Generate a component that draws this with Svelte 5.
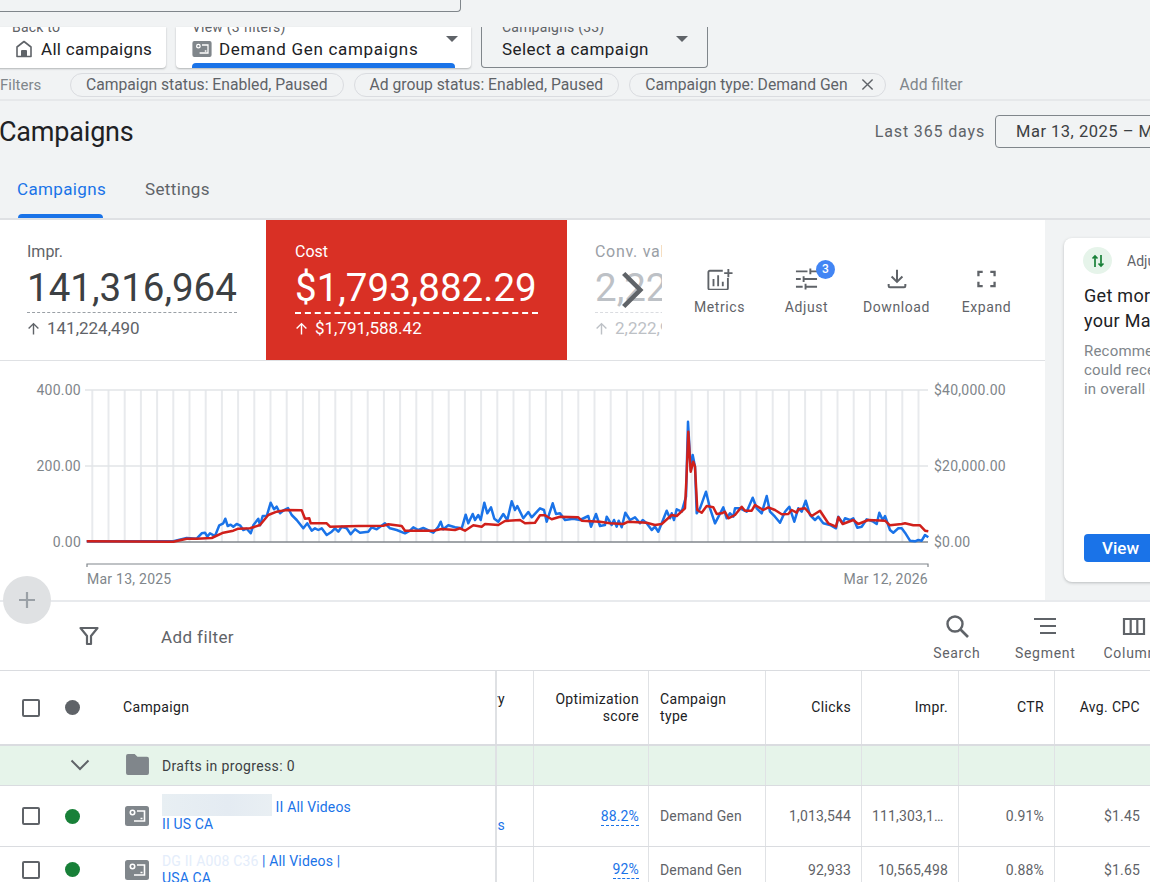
<script>
  const blueL = [80,484,340,484,380,474,410,476,425,460,435,458,442,470,450,460,465,468,478,436,490,430,496,416,503,438,512,434,520,440,530,432,540,436,550,450,560,446,572,460,580,436,595,416,600,436,608,408,620,408,632,368,642,388,650,380,660,400,672,390,684,384,695,405,710,420,730,445,742,430,755,452,765,445,775,450,785,445,800,465,815,455,825,445,835,455,845,440,860,445,872,463,885,448,900,458,925,455,935,442,950,448,975,430,990,445,1010,450,1035,460,1050,452,1060,442,1075,450,1090,444,1120,458,1135,440,1142,425,1150,448,1165,436,1185,442,1205,445,1217,404,1225,430,1238,402,1245,420,1255,405,1262,420,1273,368,1282,400,1293,382,1303,416,1315,425,1330,402,1342,420,1355,364,1365,390,1372,378,1390,415,1405,396,1415,412,1440,385,1452,390,1460,425,1478,370,1488,402,1500,400];
  const blueR = [0,400,15,420,40,416,60,420,85,408,93,440,108,402,120,438,135,435,140,410,155,435,162,420,170,440,176,422,185,442,196,398,210,420,225,412,240,430,248,420,260,430,275,450,285,440,295,455,305,430,320,392,330,415,335,400,342,420,350,388,365,395,378,350,384,125,392,270,398,225,405,260,410,400,420,385,438,335,450,385,465,430,490,382,500,415,510,400,520,410,525,385,540,385,560,395,578,353,590,385,605,400,620,348,630,395,645,410,660,428,675,395,688,380,703,425,715,385,725,395,737,362,750,405,765,420,775,410,790,430,810,435,828,445,835,410,848,430,855,415,870,420,880,415,892,443,905,440,920,418,940,425,950,432,958,398,968,420,975,408,990,450,1000,458,1015,445,1025,445,1035,458,1050,482,1065,484,1075,480,1085,482,1095,465,1105,472];
  const redL = [80,484,340,485,380,476,410,476,455,474,490,458,520,452,535,446,570,445,600,435,625,405,650,395,680,390,725,391,735,416,748,415,752,430,800,430,810,440,895,438,970,437,985,433,1025,438,1035,452,1120,452,1145,447,1185,450,1200,445,1215,452,1240,436,1265,440,1275,432,1315,435,1335,423,1380,420,1395,430,1425,428,1440,406,1455,406,1475,418,1500,410];
  const redR = [0,410,55,412,65,422,120,425,150,430,190,432,205,425,260,428,285,435,305,432,335,405,350,408,375,385,380,280,385,155,392,275,400,245,405,260,412,390,425,398,440,378,460,382,470,402,485,400,495,395,505,415,525,405,545,380,555,392,575,392,585,375,610,390,625,382,645,390,665,403,685,402,695,390,710,398,715,388,735,385,755,408,780,392,805,430,828,440,835,412,848,432,880,420,895,432,925,420,975,422,990,436,1025,432,1035,430,1060,436,1080,436,1095,452,1105,454];

  function pts(arr, ox) {
    const out = [];
    for (let i = 0; i < arr.length; i += 2) {
      out.push(`${(ox + arr[i] / 3).toFixed(1)},${(380 + arr[i + 1] / 3).toFixed(1)}`);
    }
    return out;
  }
  const bluePts = [...pts(blueL, 60), ...pts(blueR, 560)].join(' ');
  const redPts = [...pts(redL, 60), ...pts(redR, 560)].join(' ');
  const vlines = Array.from({ length: 52 }, (_, i) => 92.3 + i * 16.2);
  const yLabels = [
    { y: 390, l: '400.00', r: '$40,000.00' },
    { y: 466, l: '200.00', r: '$20,000.00' },
    { y: 542, l: '0.00', r: '$0.00' }
  ];
  const actions = ['Metrics', 'Adjust', 'Download', 'Expand'];
  const chips = ['Campaign status: Enabled, Paused', 'Ad group status: Enabled, Paused'];
</script>

{#snippet typeIcon(cls)}
  <svg class={cls} viewBox="0 0 24 20" aria-hidden="true">
    <rect width="24" height="20" rx="2.5" fill="#80868b" />
    <circle cx="7.5" cy="6.5" r="2.2" fill="none" stroke="#fff" stroke-width="1.6" />
    <path d="M12 5h7.5v10H9M15.500 12.500h2" fill="none" stroke="#fff" stroke-width="1.6" />
  </svg>
{/snippet}

{#snippet upArrow()}
  <svg class="ar" viewBox="0 0 12 12" aria-hidden="true"><path d="M6 11.500V1.500M1.500 6 6 1.500 10.500 6" fill="none" stroke="currentColor" stroke-width="1.300" /></svg>
{/snippet}

<div class="page">
  <div class="top"><div class="topbox"></div></div>

  <div class="nav">
    <div class="navcard back">
      <div class="navlabel">Back to</div>
      <div class="navval">
        <svg class="home" viewBox="0 0 20 20" aria-hidden="true">
          <path d="M10 2.500 3 8v9.500h14V8z" fill="none" stroke="#5f6368" stroke-width="1.600" stroke-linejoin="round" />
          <path d="M7 17.500v-5.500a1 1 0 0 1 1-1h4a1 1 0 0 1 1 1v5.500z" fill="#5f6368" />
        </svg>
        All campaigns
      </div>
    </div>
    <div class="navcard view">
      <div class="navlabel">View (3 filters)</div>
      <div class="navval">
        {@render typeIcon('ti-small')}
        Demand Gen campaigns
      </div>
      <span class="caret c1"></span>
      <div class="navbar"></div>
    </div>
    <div class="navcard camp">
      <div class="navlabel">Campaigns (33)</div>
      <div class="navval">Select a campaign</div>
      <span class="caret c2"></span>
    </div>
  </div>

  <div class="filters">
    <span class="flabel">Filters</span>
    {#each chips as c}<span class="chip">{c}</span>{/each}
    <span class="chip last">Campaign type: Demand Gen
      <svg viewBox="0 0 14 14" class="x" aria-hidden="true"><path d="M1.500 1.500l11 11M12.500 1.500l-11 11" stroke="#5f6368" stroke-width="1.500" fill="none" /></svg>
    </span>
    <span class="addf">Add filter</span>
  </div>

  <div class="titlerow">
    <h1>Campaigns</h1>
    <span class="last365">Last 365 days</span>
    <span class="range">Mar 13, 2025 – Mar 12, 2026</span>
  </div>

  <div class="tabs">
    <span class="tab on">Campaigns</span>
    <span class="tab">Settings</span>
  </div>

  <div class="overview">
    <div class="main">
      <div class="scores">
        <div class="score impr">
          <div class="sl">Impr.</div>
          <div class="sv">141,316,964</div>
          <div class="sd">{@render upArrow()}141,224,490</div>
        </div>
        <div class="score cost">
          <div class="sl">Cost</div>
          <div class="sv">$1,793,882.29</div>
          <div class="sd">{@render upArrow()}$1,791,588.42</div>
        </div>
        <div class="score conv">
          <div class="sl">Conv. value</div>
          <div class="sv">2,222,910.55</div>
          <div class="sd">{@render upArrow()}2,222,910.55</div>
          <svg class="chev" viewBox="0 0 26 44" preserveAspectRatio="none" aria-hidden="true"><path d="M4 3l18 19L4 41" fill="none" stroke="#5f6368" stroke-width="5" /></svg>
        </div>
        <div class="actions">
          {#each actions as a}
            <div class="act">
              {#if a === 'Metrics'}
                <svg viewBox="0 0 28 24" preserveAspectRatio="none" class="ai m" aria-hidden="true">
                  <path d="M17 3H3a1.500 1.500 0 0 0-1.500 1.500v17.500A1.500 1.500 0 0 0 3 23.500h18a1.500 1.500 0 0 0 1.500-1.500V11" fill="none" stroke="#5f6368" stroke-width="2" />
                  <path d="M7 12v8M12 8v12M17 15v5" stroke="#5f6368" stroke-width="2" fill="none" />
                  <path d="M23 1v9M18.500 5.500h9" stroke="#5f6368" stroke-width="2" fill="none" />
                </svg>
              {:else if a === 'Adjust'}
                <svg viewBox="0 0 24 22" class="ai a" aria-hidden="true">
                  <path d="M1 3h12M16 0v6M16 3h7M1 11h5M9 8v6M9 11h14M1 19h7M11 16v6M11 19h12" stroke="#5f6368" stroke-width="2" fill="none" />
                </svg>
                <span class="badge">3</span>
              {:else if a === 'Download'}
                <svg viewBox="0 0 24 22" class="ai d" aria-hidden="true">
                  <path d="M12 0v14M5.500 8l6.500 6.500L18.500 8M2 17v2.500a1.500 1.500 0 0 0 1.500 1.500h17a1.500 1.500 0 0 0 1.500-1.500V17" stroke="#5f6368" stroke-width="2.400" fill="none" />
                </svg>
              {:else}
                <svg viewBox="0 0 20 18" class="ai e" aria-hidden="true">
                  <path d="M1.500 6V1.500H6M14 1.500h4.500V6M18.500 12v4.500H14M6 16.500H1.500V12" stroke="#5f6368" stroke-width="2.400" fill="none" />
                </svg>
              {/if}
              <span class="al">{a}</span>
            </div>
          {/each}
        </div>
      </div>

      <svg class="chart" viewBox="0 361 1045 240" aria-label="Chart">
        {#each vlines as x}<line x1={x} x2={x} y1="390" y2="542" stroke="#e8eaed" stroke-width="2" />{/each}
        <line x1="85" x2="928" y1="390" y2="390" stroke="#e2e4e7" stroke-width="1.500" />
        <line x1="85" x2="928" y1="466" y2="466" stroke="#e2e4e7" stroke-width="1.500" />
        <line x1="87" x2="928" y1="542" y2="542" stroke="#80868b" stroke-width="1.500" />
        <path d="M87 567v-3h841v3" fill="none" stroke="#80868b" stroke-width="1.200" />
        <polyline points={bluePts} fill="none" stroke="#1a73e8" stroke-width="2.500" stroke-linejoin="round" />
        <polyline points={redPts} fill="none" stroke="#d0201b" stroke-width="2.500" stroke-linejoin="round" />
        {#each yLabels as t}
          <text x="81" y={t.y + 5} text-anchor="end" class="ct">{t.l}</text>
          <text x="934" y={t.y + 5} class="ct">{t.r}</text>
        {/each}
        <text x="87" y="584" class="ct">Mar 13, 2025</text>
        <text x="928" y="584" text-anchor="end" class="ct">Mar 12, 2026</text>
      </svg>
    </div>

    <div class="side">
      <div class="rec">
        <div class="rechead">
          <span class="recico">
            <svg viewBox="0 0 16 16" aria-hidden="true"><path d="M5 14V3M2.500 5.500 5 3l2.500 2.500M11 2v11M8.500 10.500 11 13l2.500-2.500" fill="none" stroke="#188038" stroke-width="1.700" /></svg>
          </span>
          Adjust your budget
        </div>
        <div class="rectitle">Get more conversions from<br />your Maximize conversions</div>
        <div class="recbody">Recommended budget<br />could receive more value<br />in overall conversions</div>
        <span class="viewbtn">View</span>
      </div>
    </div>
  </div>

  <div class="fab">
    <svg viewBox="0 0 20 20" aria-hidden="true"><path d="M10 2v16M2 10h16" stroke="#9aa0a6" stroke-width="2.200" fill="none" /></svg>
  </div>

  <div class="toolbar">
    <svg class="funnel" viewBox="0 0 20 20" aria-hidden="true"><path d="M1.500 2h17L12 10v8H8v-8z" fill="none" stroke="#5f6368" stroke-width="2.200" stroke-linejoin="round" /></svg>
    <span class="addfilter">Add filter</span>
    <div class="tools">
      <div class="tool search">
        <svg viewBox="0 0 24 24" aria-hidden="true"><circle cx="10" cy="10" r="7.500" fill="none" stroke="#5f6368" stroke-width="2.400" /><path d="M15.500 15.500 23 23" stroke="#5f6368" stroke-width="2.600" /></svg>
        <span>Search</span>
      </div>
      <div class="tool segment">
        <svg viewBox="0 0 24 24" aria-hidden="true"><path d="M1 5h22M7 12h16M7 19h16" stroke="#5f6368" stroke-width="2" /></svg>
        <span>Segment</span>
      </div>
      <div class="tool columns">
        <svg viewBox="0 0 24 24" aria-hidden="true"><path d="M2 5h20v15H2zM8.700 5v15M15.300 5v15" fill="none" stroke="#5f6368" stroke-width="2.200" /></svg>
        <span>Columns</span>
      </div>
    </div>
  </div>

  <div class="table">
    <div class="row head">
      <div class="c frozen">
        <span class="cb"></span><span class="dot grey"></span><span class="hname">Campaign</span>
      </div>
      <div class="c part"><span class="up">Delivery</span></div>
      <div class="c r wrap opt">Optimization<br />score</div>
      <div class="c wrap type">Campaign<br />type</div>
      <div class="c r">Clicks</div>
      <div class="c r">Impr.</div>
      <div class="c r">CTR</div>
      <div class="c r">Avg. CPC</div>
    </div>

    <div class="row draft">
      <div class="c frozen">
        <svg class="dchev" viewBox="0 0 20 12" aria-hidden="true"><path d="M1.500 1.500 10 10l8.500-8.500" fill="none" stroke="#5f6368" stroke-width="2" /></svg>
        <svg class="folder" viewBox="0 0 24 22" aria-hidden="true"><path d="M2 0h7l3 3h10a2 2 0 0 1 2 2v15a2 2 0 0 1-2 2H2a2 2 0 0 1-2-2V2a2 2 0 0 1 2-2z" fill="#80868b" /></svg>
        <span class="dtext">Drafts in progress: 0</span>
      </div>
      <div class="c"></div><div class="c"></div><div class="c"></div><div class="c"></div><div class="c"></div><div class="c"></div><div class="c"></div>
    </div>

    <div class="row data r1">
      <div class="c frozen">
        <span class="cb"></span><span class="dot"></span>
        {@render typeIcon('ti')}
        <div class="name"><span class="blur"></span> II All Videos<br />II US CA</div>
      </div>
      <div class="c part"><span class="low">Campaigns</span></div>
      <div class="c r opt"><span class="score-link">88.2%</span></div>
      <div class="c type">Demand Gen</div>
      <div class="c r">1,013,544</div>
      <div class="c tr">111,303,1…</div>
      <div class="c r">0.91%</div>
      <div class="c r">$1.45</div>
    </div>

    <div class="row data r2">
      <div class="c frozen">
        <span class="cb"></span><span class="dot"></span>
        {@render typeIcon('ti')}
        <div class="name"><span class="faded">DG II A008 C36</span> | All Videos |<br />USA CA</div>
      </div>
      <div class="c part"><span class="low">Campaigns</span></div>
      <div class="c r opt"><span class="score-link">92%</span></div>
      <div class="c type">Demand Gen</div>
      <div class="c r">92,933</div>
      <div class="c r">10,565,498</div>
      <div class="c r">0.88%</div>
      <div class="c r">$1.65</div>
    </div>
  </div>
</div>

<style>
  :global(body) { margin: 0; background: #f1f3f4; }
  .page {
    position: relative; width: 1150px; height: 882px; overflow: hidden;
    font-family: Roboto, "Liberation Sans", sans-serif; color: #3c4043; background: #f1f3f4;
  }
  .top { height: 27px; }
  .topbox { width: 460px; height: 11px; border: 1.5px solid #80868b; border-top: 0; border-left: 0; border-radius: 0 0 4px 0; box-sizing: content-box; }

  .nav { display: flex; height: 41px; gap: 10px; margin-left: -8px; }
  .navcard { position: relative; background: #fff; box-sizing: border-box; height: 41px; overflow: hidden; border-radius: 0 0 4px 4px; box-shadow: 0 1px 2px rgba(60,64,67,.35); }
  .back { width: 174px; padding-left: 20px; }
  .view { width: 295px; padding-left: 16px; display: flex; flex-direction: column; }
  .camp { width: 227px; padding-left: 20px; background: #f1f3f4; border: 1px solid #80868b; border-top: 0; box-shadow: none; }
  .navlabel { font-size: 14px; line-height: 16px; margin-top: -8px; color: #5f6368; letter-spacing: .2px; }
  .navval { display: flex; align-items: center; gap: 7px; font-size: 17px; line-height: 20px; margin-top: 4px; color: #202124; letter-spacing: .45px; white-space: nowrap; }
  .back .navval { letter-spacing: .3px; }
  .view .navval { letter-spacing: .7px; }
  .home { width: 20px; height: 20px; margin-left: 2px; }
  .ti-small { width: 20px; height: 16px; }
  .navbar { position: absolute; left: 16px; right: 16px; bottom: 0; height: 5px; background: #1a73e8; border-radius: 4px 4px 0 0; }
  .caret { position: absolute; width: 0; height: 0; border-left: 6px solid transparent; border-right: 6px solid transparent; border-top: 6px solid #5f6368; top: 9px; }
  .c1 { right: 13px; }
  .c2 { right: 19px; }

  .filters { display: flex; align-items: center; height: 33px; box-sizing: border-box; padding-top: 2px; border-bottom: 2px solid #e6e8ea; font-size: 15.700px; color: #5f6368; white-space: nowrap; }
  .flabel { width: 70px; color: #80868b; font-size: 15px; }
  .chip { display: inline-flex; align-items: center; height: 24px; box-sizing: border-box; padding: 0 15px; border: 1px solid #dadce0; border-radius: 12px; margin-right: 10px; }
  .chip.last { margin-right: 14px; padding-right: 11px; }
  .x { width: 13px; height: 13px; margin-left: 13px; }
  .addf { color: #80868b; }

  .titlerow { display: flex; align-items: center; height: 61px; padding-bottom: 1px; box-sizing: border-box; }
  h1 { margin: 2px 0 0 -1px; font-size: 27px; font-weight: 400; color: #202124; letter-spacing: -.2px; }
  .last365 { margin-left: auto; margin-right: 10px; font-size: 16px; color: #5f6368; letter-spacing: .85px; }
  .range { flex: none; box-sizing: border-box; width: 215px; height: 33px; margin-right: -60px; padding-left: 20px; line-height: 31px; border: 1px solid #80868b; border-radius: 4px; font-size: 16.500px; color: #3c4043; letter-spacing: .5px; white-space: nowrap; overflow: hidden; }

  .tabs { display: flex; height: 56px; padding-left: 17px; gap: 39px; border-bottom: 2px solid #dfe1e4; }
  .tab { position: relative; font-size: 17px; line-height: 20px; padding-top: 17px; color: #5f6368; letter-spacing: .35px; }
  .tab.on { color: #1a73e8; }
  .tab.on::after { content: ""; position: absolute; left: 1px; right: 3px; bottom: 0; height: 4px; background: #1a73e8; border-radius: 4px 4px 0 0; }

  .overview { display: flex; height: 380px; border-bottom: 2px solid #e8eaed; }
  .main { width: 1045px; flex: none; background: #fff; }
  .scores { display: flex; height: 140px; border-bottom: 1px solid #dfe1e4; }
  .score { box-sizing: border-box; padding-top: 22px; flex: none; position: relative; white-space: nowrap; }
  .impr { width: 266px; padding-left: 27px; }
  .cost { width: 301px; padding-left: 29px; background: #d93025; color: #fff; }
  .conv { width: 95px; padding-left: 28px; color: #bdc1c6; overflow: hidden; }
  .sl { font-size: 16px; line-height: 19px; color: #5f6368; }
  .cost .sl { color: #fff; }
  .conv .sl { color: #9aa0a6; letter-spacing: .7px; }
  .sv { font-size: 38.500px; line-height: 46px; margin-top: 4px; color: #3c4043; padding-bottom: 1px; border-bottom: 1px dashed #9aa0a6; width: 210px; }
  .cost .sv { color: #fff; width: 243px; border-bottom: 2px dashed #fff; }
  .conv .sv { color: #bdc1c6; border-bottom-color: #dadce0; width: 210px; }
  .sd { display: flex; align-items: center; font-size: 17px; line-height: 20px; margin-top: 5px; color: #5f6368; }
  .cost .sd { color: #fff; margin-top: 4px; }
  .conv .sd { color: #bdc1c6; }
  .ar { width: 13px; height: 13px; margin-right: 7px; flex: none; }
  .chev { position: absolute; left: 53px; top: 51px; width: 24px; height: 38px; }

  .actions { display: flex; margin-left: 14px; padding-top: 48px; }
  .act { position: relative; width: 87px; display: flex; flex-direction: column; align-items: center; }
  .act:nth-child(3) { width: 93px; }
  .ai { height: 22px; }
  .ai.m { width: 26px; }
  .ai.a { width: 23px; }
  .ai.d { width: 20px; }
  .ai.e { width: 19px; }
  .al { margin-top: 9px; font-size: 14px; line-height: 16px; color: #5f6368; letter-spacing: .6px; }
  .badge { position: absolute; left: 53px; top: -8px; width: 19px; height: 19px; border-radius: 50%; background: #4285f4; color: #fff; font-size: 12px; font-weight: 500; line-height: 19px; text-align: center; }

  .chart { display: block; width: 1045px; height: 240px; }
  .ct { font: 14px Roboto, "Liberation Sans", sans-serif; fill: #80868b; letter-spacing: .25px; }

  .side { flex: 1; min-width: 0; padding: 18px 0 0 19px; }
  .rec { width: 300px; height: 344px; box-sizing: border-box; background: #fff; border-radius: 8px; box-shadow: 0 1px 3px rgba(60,64,67,.3); padding: 9px 0 0 20px; position: relative; white-space: nowrap; }
  .rechead { display: flex; align-items: center; gap: 15px; font-size: 14px; color: #5f6368; }
  .recico { width: 29px; height: 27px; border-radius: 50%; background: #e6f4ea; display: flex; align-items: center; justify-content: center; margin-left: -1px; }
  .recico svg { width: 16px; height: 16px; }
  .rectitle { margin-top: 9px; font-size: 18px; line-height: 25px; color: #202124; letter-spacing: .3px; }
  .recbody { margin-top: 9px; font-size: 15px; line-height: 19px; color: #80868b; letter-spacing: .2px; }
  .viewbtn { position: absolute; left: 20px; top: 296px; width: 90px; height: 28px; box-sizing: border-box; padding-left: 18px; line-height: 28px; background: #1a73e8; color: #fff; border-radius: 4px; font-size: 17px; font-weight: 500; }

  .fab { position: absolute; left: 3px; top: 576px; width: 48px; height: 48px; border-radius: 50%; background: #dfe1e3; display: flex; align-items: center; justify-content: center; }
  .fab svg { width: 20px; height: 20px; }

  .toolbar { display: flex; align-items: center; height: 68px; background: #fff; border-bottom: 1px solid #dadce0; }
  .funnel { width: 20px; height: 20px; margin-left: 79px; }
  .addfilter { margin-left: 62px; font-size: 17px; color: #5f6368; letter-spacing: .4px; padding-top: 1px; }
  .tools { margin-left: auto; display: flex; align-self: flex-start; padding-top: 12px; margin-right: -28px; }
  .tool { width: 88.500px; display: flex; flex-direction: column; align-items: center; font-size: 14px; color: #5f6368; letter-spacing: .7px; }
  .tool svg { width: 24px; height: 24px; margin-bottom: 7px; }
  .tool span { line-height: 16px; }

  .table { background: #fff; font-size: 14px; color: #5f6368; }
  .row { display: grid; grid-template-columns: 497px 37px 115px 117px 96px 97px 96px 96px; border-bottom: 1px solid #dadce0; }
  .c { box-sizing: border-box; display: flex; align-items: center; padding: 0 10px; border-right: 1px solid #e0e2e5; white-space: nowrap; overflow: hidden; letter-spacing: .15px; }
  .c.r { justify-content: flex-end; text-align: right; }
  .c.opt { padding-right: 9px; }
  .c.type { padding-left: 11px; }
  .frozen { padding: 0 0 0 22px; border-right: 2px solid #dfe1e4; }
  .part { padding: 0 28px 0 0; justify-content: flex-end; }
  .head { height: 75px; border-bottom: 2px solid #dadce0; box-sizing: border-box; }
  .head .c { color: #202124; line-height: 17px; letter-spacing: .35px; }
  .hname { margin-left: 43px; }
  .head .dot { margin-right: 0; }
  .wrap { white-space: normal; }
  .up { margin-bottom: 17px; }
  .low { margin-top: 17px; color: #1a73e8; }
  .draft { height: 40px; background: #e6f4ea; box-sizing: border-box; }
  .dchev { width: 20px; height: 12px; margin-left: 48px; margin-top: -2px; }
  .folder { width: 25px; height: 21px; margin-left: 35px; margin-top: -2px; }
  .dtext { margin-left: 12px; letter-spacing: .35px; color: #3c4043; }
  .r1 { height: 61px; box-sizing: border-box; }
  .r2 { height: 46px; box-sizing: border-box; }
  .r2 .low { margin-top: 40px; }
  .cb { flex: none; width: 18px; height: 18px; border: 2px solid #5f6368; border-radius: 2px; box-sizing: border-box; }
  .dot { flex: none; width: 15px; height: 15px; border-radius: 50%; background: #188038; margin-left: 25px; margin-right: 45px; }
  .dot.grey { background: #5f6368; }
  .ti { flex: none; width: 24px; height: 20px; }
  .name { margin-left: 13px; line-height: 17px; color: #1a73e8; letter-spacing: .15px; }
  .blur { display: inline-block; width: 110px; height: 22px; margin-top: -5px; vertical-align: bottom; background: linear-gradient(90deg, #e8eff3, #e4ebf2 60%, #e9eff3); }
  .faded { color: #e4edfb; }
  .score-link { color: #1a73e8; border-bottom: 1.500px dashed #1a73e8; line-height: 18px; }
</style>
